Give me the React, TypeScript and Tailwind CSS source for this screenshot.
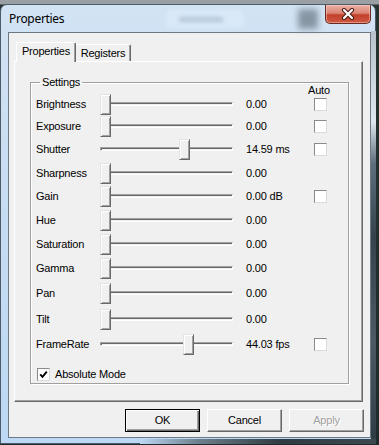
import React from "react";

type Row = { label: string; value: string; pos: number; auto?: boolean; h: string };

// row pitch in the dialog is not quite even, so each row carries its own height
const rows: Row[] = [
  { label: "Brightness", value: "0.00", pos: 0, auto: true, h: "h-[22px]" },
  { label: "Exposure", value: "0.00", pos: 0, auto: true, h: "h-[23px]" },
  { label: "Shutter", value: "14.59 ms", pos: 79, auto: true, h: "h-[24px]" },
  { label: "Sharpness", value: "0.00", pos: 0, h: "h-[23px]" },
  { label: "Gain", value: "0.00 dB", pos: 0, auto: true, h: "h-[24px]" },
  { label: "Hue", value: "0.00", pos: 0, h: "h-[24px]" },
  { label: "Saturation", value: "0.00", pos: 0, h: "h-[24px]" },
  { label: "Gamma", value: "0.00", pos: 0, h: "h-[25px]" },
  { label: "Pan", value: "0.00", pos: 0, h: "h-[26px]" },
  { label: "Tilt", value: "0.00", pos: 0, h: "h-[25px]" },
  { label: "FrameRate", value: "44.03 fps", pos: 83, auto: true, h: "h-[24px]" },
];

function Checkbox({ checked = false }: { checked?: boolean }) {
  return (
    <div className="w-[13px] h-[13px] flex-shrink-0 flex items-center justify-center border border-t-[#8a8a8a] border-l-[#8a8a8a] border-r-[#dadada] border-b-[#dadada] bg-white">
      {checked && (
        <svg width="9" height="9" viewBox="0 0 9 9">
          <path d="M1.2 4.3 L3.5 6.8 L7.8 1.6" fill="none" stroke="#000" strokeWidth="1.9" />
        </svg>
      )}
    </div>
  );
}

function Slider({ pos }: { pos: number }) {
  return (
    <div className="relative w-[133px] h-[21px] flex-shrink-0">
      {/* channel */}
      <div className="absolute left-0 right-0 top-[8px] h-[4px] border border-t-[#a0a0a0] border-l-[#a0a0a0] border-r-white border-b-white shadow-[inset_1px_1px_0_#696969]" />
      {/* thumb */}
      <div
        className="absolute top-0 w-[11px] h-[21px] bg-[#f0f0f0] border border-t-[#e3e3e3] border-l-[#e3e3e3] border-r-[#696969] border-b-[#696969] shadow-[inset_1px_1px_0_#fff,inset_-1px_-1px_0_#a0a0a0]"
        style={{ left: pos }}
      />
    </div>
  );
}

function SliderRow({ row }: { row: Row }) {
  return (
    <div className={row.h}>
      <div className="flex items-center h-[24px]">
        <span className="w-[64px] flex-shrink-0">{row.label}</span>
        <Slider pos={row.pos} />
        <span className="w-[68px] pl-[13px] flex-shrink-0 whitespace-nowrap box-content">{row.value}</span>
        {row.auto && <Checkbox />}
      </div>
    </div>
  );
}

function Button({ label, primary, disabled }: { label: string; primary?: boolean; disabled?: boolean }) {
  return (
    <div
      className={`w-[75px] h-[23px] flex items-center justify-center bg-[#f0f0f0] ${
        primary
          ? "border border-black shadow-[inset_1px_1px_0_#fff,inset_-1px_-1px_0_#696969,inset_-2px_-2px_0_#a0a0a0]"
          : "border border-t-white border-l-white border-r-[#696969] border-b-[#696969] shadow-[inset_-1px_-1px_0_#a0a0a0]"
      } ${disabled ? "text-[#a0a0a0] [text-shadow:1px_1px_0_#fff]" : "text-black"}`}
    >
      {label}
    </div>
  );
}

export default function App() {
  return (
    <div className="relative w-[379px] h-[445px] overflow-hidden bg-[linear-gradient(180deg,#9a9fa3_0px,#9a9fa3_4px,#26332f_5px,#1f2b2a_100%)] font-['Liberation_Sans',Arial,sans-serif] text-[11px] tracking-[-0.2px] text-black">
      {/* window */}
      <div className="absolute left-0 top-[4px] w-[376px] h-[440px] rounded-t-[7px] border border-[#4d5b68] bg-gradient-to-b from-[#d2e3f4] via-[#c6dcf2] to-[#bcd8f4] flex flex-col overflow-hidden">
        {/* title bar */}
        <div className="relative h-[27px] flex items-start">
          <div className="absolute left-[165px] top-[5px] w-[78px] h-[18px] rounded-sm bg-[#d9e9f8] blur-[2px]" />
          <div className="absolute left-[178px] top-[12px] w-[44px] h-[5px] bg-[#b4c6d8] blur-[2px]" />
          <div className="absolute left-[297px] top-[4px] w-[20px] h-[20px] bg-[#8796a3] blur-[3px]" />
          <span className="relative self-center pl-[8px] pt-[1px] font-['Noto_Sans',sans-serif] text-[12px] tracking-[-0.3px] text-black">
            Properties
          </span>
          <div className="relative ml-auto mr-[4px] w-[46px] h-[19px] rounded-b-[5px] border border-t-0 border-[#6a2a21] bg-[linear-gradient(180deg,#eab0a3_0%,#dc8574_45%,#c2402c_55%,#cf5a43_100%)] shadow-[inset_0_0_0_1px_rgba(255,220,210,0.45)] flex items-center justify-center">
            <svg width="14" height="12" viewBox="0 0 14 12">
              <path d="M3 2 L11 10 M11 2 L3 10" stroke="#4a1a14" strokeWidth="4.2" strokeLinecap="round" />
              <path d="M3 2 L11 10 M11 2 L3 10" stroke="#ffffff" strokeWidth="2.2" strokeLinecap="round" />
            </svg>
          </div>
        </div>

        {/* client area */}
        <div className="ml-[7px] w-[363px] h-[406px] border border-[#6b7886] bg-[#f0f0f0] flex flex-col px-[5px] pt-[9px]">
          {/* tabs */}
          <div className="flex items-end h-[19px] pl-[2px]">
            <div className="relative z-10 w-[60px] h-[20px] -mb-px bg-[#f0f0f0] rounded-t-[2px] border-l border-t border-r border-l-white border-t-white border-r-[#696969] shadow-[inset_-1px_0_0_#a0a0a0] flex items-center justify-center pb-[2px]">
              Properties
            </div>
            <div className="w-[55px] h-[17px] bg-[#f0f0f0] rounded-tr-[2px] border-t border-r border-t-white border-r-[#696969] shadow-[inset_-1px_0_0_#a0a0a0] flex items-center justify-center">
              Registers
            </div>
          </div>

          {/* tab panel */}
          <div className="w-[349px] h-[341px] border border-t-white border-l-white border-r-[#696969] border-b-[#696969] shadow-[inset_-1px_-1px_0_#a0a0a0] pl-[15px] pt-[14px]">
            <fieldset className="w-[319px] h-[308px] border border-[#a0a0a0] shadow-[inset_1px_1px_0_#fff,1px_1px_0_#fff] pl-[5px]">
              <legend className="ml-[4px] px-[2px] leading-[13px]">Settings</legend>
              <div className="h-[13px] leading-[13px] -mt-[5px] pl-[272px]">Auto</div>
              <div className="-mt-[5px] flex flex-col">
                {rows.map((r) => (
                  <SliderRow key={r.label} row={r} />
                ))}
              </div>
              <div className="mt-[9px] h-[18px] flex items-center gap-[5px] pl-px">
                <Checkbox checked />
                <span>Absolute Mode</span>
              </div>
            </fieldset>
          </div>

          {/* buttons */}
          <div className="mt-[7px] flex justify-end gap-[7px] pr-px">
            <Button label="OK" primary />
            <Button label="Cancel" />
            <Button label="Apply" disabled />
          </div>
        </div>
      </div>

      {/* glass frame showing the dark desktop on the right and bottom */}
      <div className="absolute left-[371px] top-[31px] w-[5px] h-[413px] bg-[linear-gradient(180deg,#b7c2cb_0%,#dfe8ee_22%,#5f6f7c_32%,#34434d_50%,#4b5a64_75%,#2f3c44_100%)]" />
      <div className="absolute left-[140px] top-[439px] w-[236px] h-[5px] bg-[linear-gradient(90deg,#bcd8f4_0%,#6d7f8b_25%,#2f3b40_60%,#3c4a50_100%)]" />
    </div>
  );
}
